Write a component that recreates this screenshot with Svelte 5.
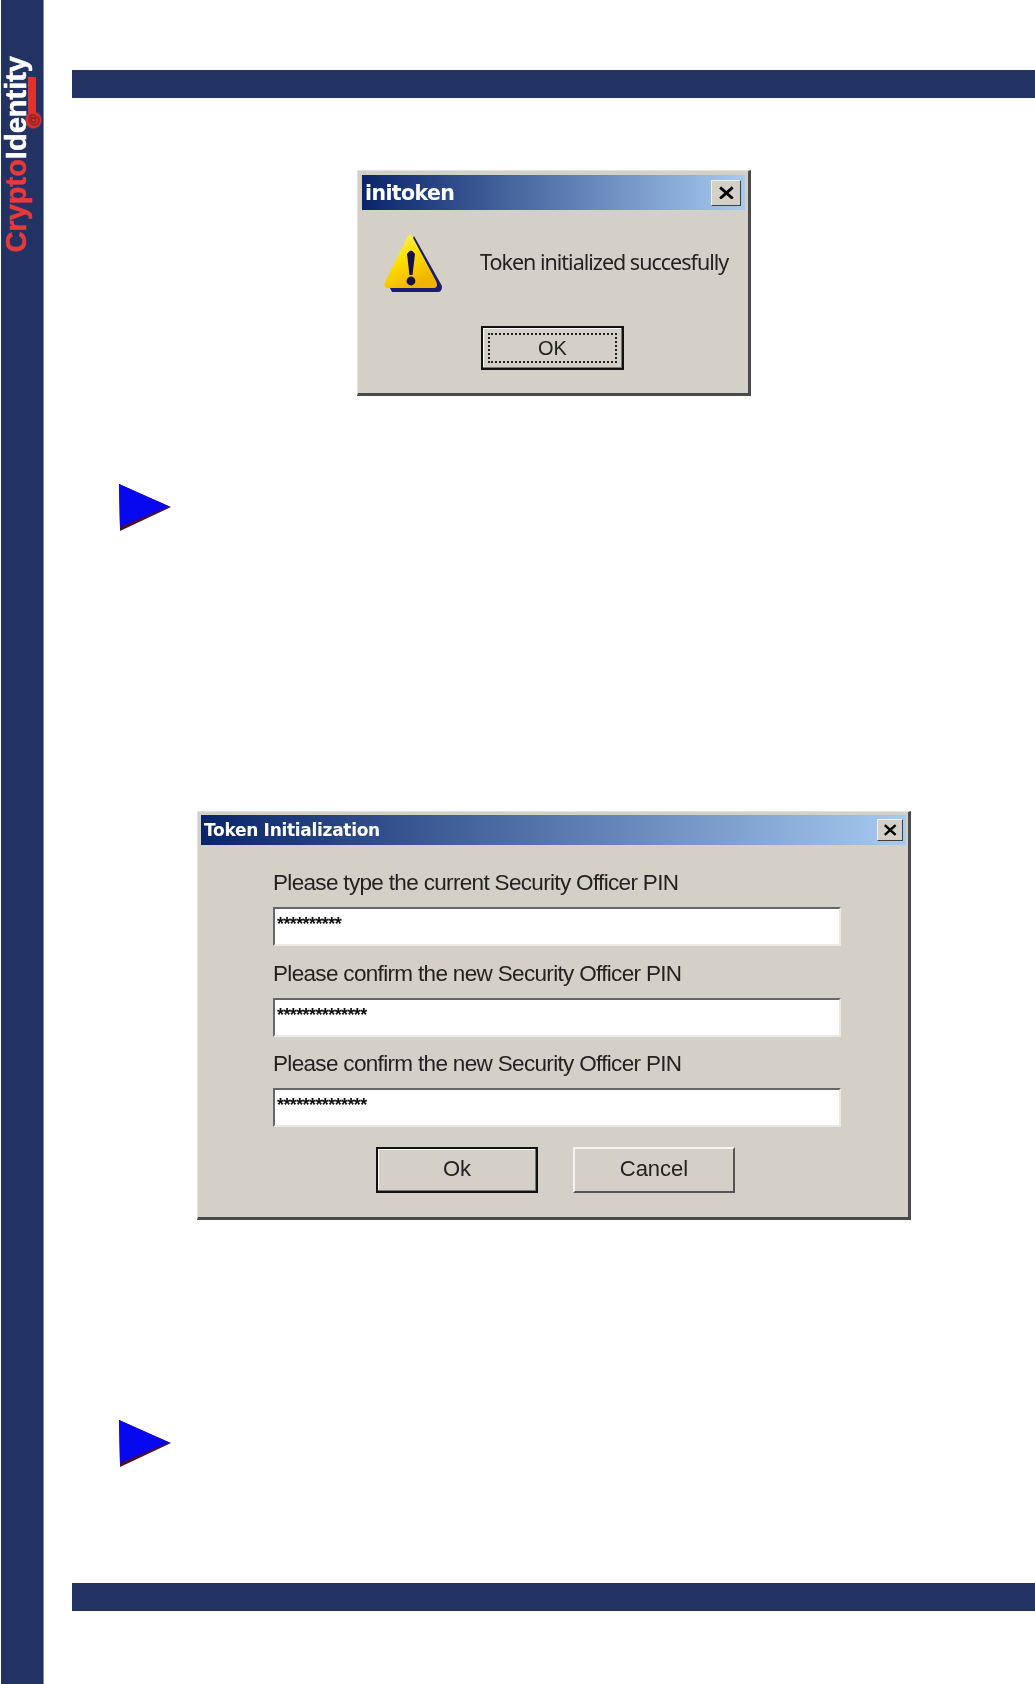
<script>
  const fields = [
    { label: 'Please type the current Security Officer PIN', value: '**********' },
    { label: 'Please confirm the new Security Officer PIN', value: '**************' },
    { label: 'Please confirm the new Security Officer PIN', value: '**************' }
  ];
</script>

{#snippet closeBtn(cls)}
  <span class="close {cls}">
    <svg viewBox="0 0 12 10" aria-hidden="true"><path d="M1.5 1 L10.5 9 M10.5 1 L1.5 9" stroke="#000" stroke-width="2" fill="none"/></svg>
  </span>
{/snippet}

{#snippet marker()}
  <svg class="marker" viewBox="0 0 52 47" aria-hidden="true">
    <polygon points="0,0 52,23 1,47" fill="#4a1030"/>
    <polygon points="0,0 50,22.5 1,43" fill="#0808f0"/>
  </svg>
{/snippet}

<div class="page">
  <aside class="side">
    <div class="mark">
      <span class="at">@</span><span class="tail"></span>
    </div>
    <div class="logo">
      <span class="red">Crypto</span><span class="white">Identity</span>
    </div>
  </aside>

  <main class="main">
    <div class="bar top"></div>

    <section class="dlg small">
      <header class="title big">
        <span>initoken</span>
        {@render closeBtn('c-big')}
      </header>
      <div class="msg">
        <svg class="warn" viewBox="0 0 58 58" aria-hidden="true">
          <defs>
            <linearGradient id="y" x1="0" y1="0" x2="0.5" y2="1">
              <stop offset="0" stop-color="#fff27a"/>
              <stop offset="0.5" stop-color="#ffe000"/>
              <stop offset="1" stop-color="#f0b400"/>
            </linearGradient>
          </defs>
          <path d="M30 2 L58 52 Q58 58 54 58 L8 58 L6 54 Z" fill="#1c1c70"/>
          <path d="M24 2 Q26 -1 28 2 L52 47 Q55 54 49 54 L4 54 Q-1 54 1 48 Z" fill="url(#y)"/>
          <path d="M23 20 Q27 13 31 20 L28.5 41 L25.5 41 Z" fill="#141050"/>
          <circle cx="27" cy="47" r="4.4" fill="#141050"/>
        </svg>
        <p>Token initialized succesfully</p>
      </div>
      <div class="okrow">
        <button class="btn default ok1"><span class="focus">OK</span></button>
      </div>
    </section>

    {@render marker()}

    <section class="dlg large">
      <header class="title">
        <span>Token Initialization</span>
        {@render closeBtn('c-small')}
      </header>
      <div class="form">
        {#each fields as f}
          <div class="field">
            <div class="label">{f.label}</div>
            <div class="input">{f.value}</div>
          </div>
        {/each}
        <div class="actions">
          <button class="btn default wide">Ok</button>
          <button class="btn wide">Cancel</button>
        </div>
      </div>
    </section>

    {@render marker()}

    <div class="bar bottom"></div>
  </main>
</div>

<style>
  :global(body) { margin: 0; background: #fff; }
  .page { display: flex; width: 1035px; height: 1684px; overflow: hidden; background: #fff; }

  .side {
    position: relative; flex: none; width: 42px; height: 100%;
    margin-left: 1px; background: #223263; border-right: 1px solid #7c88a8;
  }
  .logo {
    position: absolute; left: -1px; top: 56px;
    writing-mode: vertical-rl; transform: rotate(180deg);
    font: 700 29px/33px "Liberation Sans", sans-serif; letter-spacing: 0;
    -webkit-text-stroke: .5px currentColor;
    white-space: nowrap; filter: blur(.4px);
  }
  .red { color: #e83a3a; }
  .white { color: #fff; }
  .mark {
    position: absolute; left: 24px; top: 77px; width: 17px;
    display: flex; flex-direction: column-reverse; align-items: center;
  }
  .at {
    width: 17px; height: 16px; border-radius: 50%;
    background: #d8332f; color: #6a1220; font: 700 13px/16px "Liberation Sans", sans-serif;
    text-align: center; transform: rotate(-90deg); filter: blur(.3px);
  }
  .tail { width: 8px; height: 36px; background: #e0332f; margin-bottom: -1px; margin-right: 4px; filter: blur(.5px); }

  .main { flex: none; width: 991px; margin-left: 28px; }
  .bar { height: 28px; width: 963px; background: #223263; }
  .top { margin-top: 70px; }
  .bottom { margin-top: 116px; }

  .dlg {
    box-sizing: border-box; background: #d4d0c8;
    border: 1px solid #e4e2dc; border-right: 3px solid #4a4a4a; border-bottom: 3px solid #4a4a4a;
    padding: 4px 3px 0 4px; font-family: "Liberation Sans", sans-serif; color: #111;
    filter: blur(.45px);
  }
  .small { width: 394px; height: 226px; margin: 72px 0 0 285px; }
  .large { width: 714px; height: 409px; margin: 0 0 0 125px; padding: 3px 2px 0 3px; }

  .title {
    display: flex; align-items: center; justify-content: space-between;
    height: 30px; padding: 0 3px 0 3px;
    background: linear-gradient(90deg, #0a246a, #a6caf0);
    color: #fff; font: 700 17px "DejaVu Sans", sans-serif; letter-spacing: -.3px;
  }
  .title.big { height: 35px; font-size: 20.5px; letter-spacing: -.6px; padding-right: 4px; }

  .close {
    box-sizing: border-box; display: flex; align-items: center; justify-content: center;
    background: #d4d0c8; border: 1px solid; border-color: #f4f2ee #404040 #404040 #f4f2ee;
  }
  .close svg { width: 60%; }
  .c-big { width: 30px; height: 26px; }
  .c-small { width: 26px; height: 22px; }

  .msg { display: flex; align-items: center; height: 116px; padding-left: 22px; padding-bottom: 10px; box-sizing: border-box; }
  .warn { width: 58px; height: 58px; flex: none; }
  .msg p {
    margin: -3px 0 0 38px; font: 400 21.5px "Noto Sans", sans-serif; letter-spacing: -1px; white-space: nowrap; color: #222;
  }
  .okrow { padding-left: 119px; }

  .btn {
    box-sizing: border-box; background: #d4d0c8; color: #222; padding: 0 0 3px;
    font-family: "Liberation Sans", sans-serif; font-size: 22px;
    border: 2px solid; border-color: #f6f4f0 #555 #555 #f6f4f0;
  }
  .btn.default { border-color: #111; box-shadow: inset -1px -1px 0 #777, inset 1px 1px 0 #fff; }
  .ok1 { width: 143px; height: 44px; padding: 5px; }
  .focus { display: block; height: 100%; line-height: 26px; box-sizing: border-box; border: 2px dotted #222; font-size: 20px; }
  .wide { width: 162px; height: 46px; }

  .form { padding: 23px 0 0 72px; }
  .field { height: 90.5px; }
  .label { box-sizing: border-box; font-size: 22.5px; line-height: 28px; height: 39px; padding-top: 1px; white-space: nowrap; letter-spacing: -.67px; color: #222; }
  .input {
    box-sizing: border-box; width: 568px; height: 39px; background: #fff; padding: 7px 0 0 2px;
    border: 2px solid; border-color: #666 #ece9e2 #ece9e2 #666;
    font: 700 18px/16px "Liberation Sans", sans-serif; letter-spacing: -.6px; color: #111;
  }
  .actions { display: flex; gap: 35px; margin-left: 103px; margin-top: 7.5px; }

  .marker { display: block; width: 52px; height: 47px; margin-left: 47px; }
  .small + .marker { margin-top: 88px; margin-bottom: 280px; }
  .large + .marker { margin-top: 200px; }
</style>
